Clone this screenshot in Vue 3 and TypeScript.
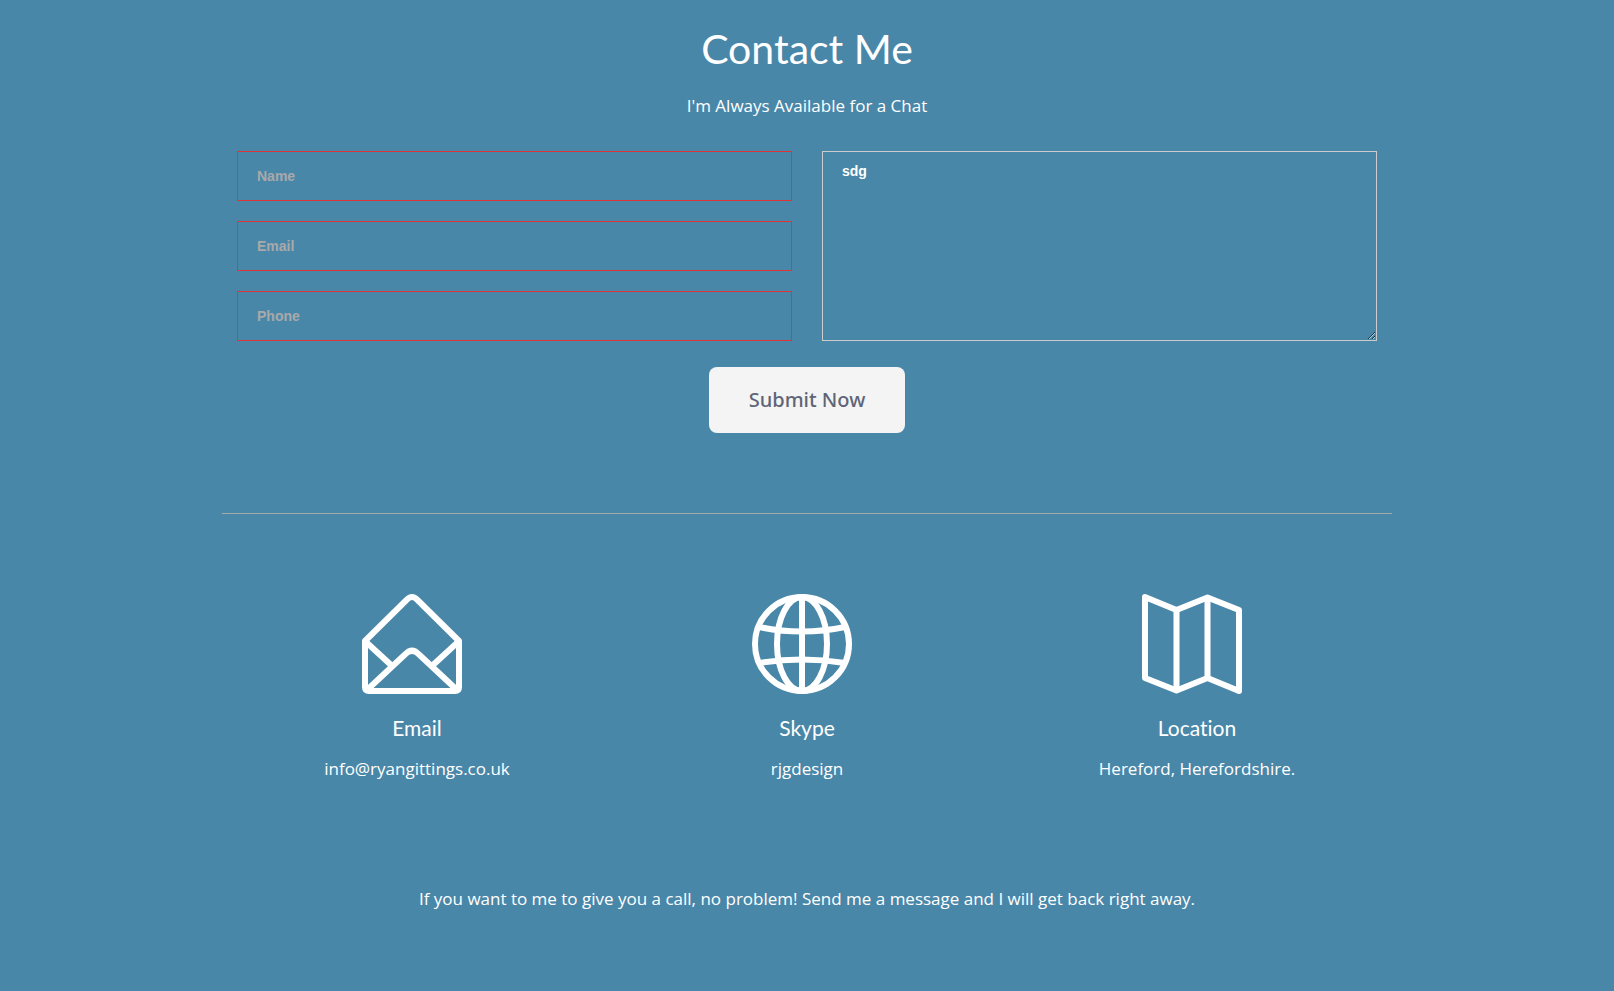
<script setup lang="ts">
import { ref } from 'vue'

interface Field {
  id: string
  label: string
  type: string
}

interface Detail {
  icon: 'mail' | 'globe' | 'map'
  title: string
  text: string
}

const fields: Field[] = [
  { id: 'name', label: 'Name', type: 'text' },
  { id: 'email', label: 'Email', type: 'email' },
  { id: 'phone', label: 'Phone', type: 'tel' },
]

const details: Detail[] = [
  { icon: 'mail', title: 'Email', text: 'info@ryangittings.co.uk' },
  { icon: 'globe', title: 'Skype', text: 'rjgdesign' },
  { icon: 'map', title: 'Location', text: 'Hereford, Herefordshire.' },
]

const values = ref<Record<string, string>>({ name: '', email: '', phone: '' })
const message = ref('sdg')
</script>

<template>
  <main class="contact">
    <header class="intro">
      <h1>Contact Me</h1>
      <p>I'm Always Available for a Chat</p>
    </header>

    <form class="form" novalidate @submit.prevent>
      <div class="fields">
        <div class="column">
          <input
            v-for="field in fields"
            :id="field.id"
            :key="field.id"
            v-model="values[field.id]"
            class="control"
            :class="{ invalid: !values[field.id] }"
            :type="field.type"
            :placeholder="field.label"
            :aria-label="field.label"
          />
        </div>
        <textarea v-model="message" class="control message" aria-label="Message"></textarea>
      </div>
      <button class="submit" type="submit">Submit Now</button>
    </form>

    <hr class="divider" />

    <section class="details">
      <article v-for="item in details" :key="item.title" class="detail">
        <div class="icon">
          <svg v-if="item.icon === 'mail'" viewBox="0 0 100 100" aria-hidden="true">
            <path d="M3 47 44.500 6Q50 0 55.500 6L97 47V93Q97 97 93 97H7Q3 97 3 93Z" />
            <path d="M4 48 29 71M96 48 71 71" />
            <path d="M5 96 43.500 60Q50 53.500 56.500 60L95 96" />
          </svg>
          <svg v-else-if="item.icon === 'globe'" viewBox="0 0 100 100" aria-hidden="true">
            <circle cx="50" cy="50" r="47" />
            <ellipse cx="50" cy="50" rx="25" ry="47" />
            <path d="M50 3V97" />
            <path d="M7 33Q50 42 93 33M7 69Q50 62 93 69" />
          </svg>
          <svg v-else viewBox="0 0 100 100" aria-hidden="true">
            <path d="M3 3 34.500 16 65.500 3.500 97 16V97L65.500 84 34.500 96.500 3 84Z" />
            <path d="M34.500 16V96M65.500 4V84" />
          </svg>
        </div>
        <h2>{{ item.title }}</h2>
        <p>{{ item.text }}</p>
      </article>
    </section>

    <p class="closing">
      If you want to me to give you a call, no problem! Send me a message and I will get back right away.
    </p>
  </main>
</template>

<style>
body {
  margin: 0;
  background: #4987a9;
}
</style>

<style scoped>
.contact {
  box-sizing: border-box;
  max-width: 1170px;
  margin: 0 auto;
  padding: 24px 0 72px;
  color: #fff;
  font-family: "Open Sans", "Noto Sans", sans-serif;
  font-size: 17px;
  line-height: 24px;
  text-align: center;
}

h1,
h2,
p {
  margin: 0;
}

h1,
h2 {
  font-family: Lato, sans-serif;
  font-weight: 400;
  font-variant-ligatures: none;
}

h1 {
  font-size: 41px;
  line-height: 50px;
}

.intro p {
  margin-top: 20px;
}

.form {
  padding: 33px 15px 0;
}

.fields {
  display: grid;
  grid-template-columns: 1fr 1fr;
  gap: 30px;
}

.column {
  display: grid;
  gap: 20px;
}

.control {
  box-sizing: border-box;
  display: block;
  width: 100%;
  height: 50px;
  margin: 0;
  padding: 9px 19px;
  border: 1px solid #ccc;
  border-radius: 0;
  outline: 0;
  background: transparent;
  color: #fff;
  font: bold 14px/20px "Liberation Sans", Arial, sans-serif;
}

.control::placeholder {
  color: #a9a9a9;
  opacity: 1;
}

.control.invalid {
  border-color: #e33434;
}

.message {
  height: 190px;
  resize: both;
}

.submit {
  margin-top: 26px;
  padding: 18px 40px;
  border: 0;
  border-radius: 8px;
  background: #f4f4f4;
  color: #5f6577;
  font: 500 20px/30px "Noto Sans", "Open Sans", sans-serif;
  cursor: pointer;
}

.divider {
  height: 1px;
  margin: 80px 0;
  border: 0;
  background: #a5a9ad;
}

.details {
  display: grid;
  grid-template-columns: repeat(3, 1fr);
}

.icon {
  height: 100px;
  padding-right: 10px;
}

.icon svg {
  width: 100px;
  height: 100px;
  fill: none;
  stroke: #fff;
  stroke-width: 6;
  stroke-linejoin: round;
}

h2 {
  margin-top: 20px;
  font-size: 21px;
  line-height: 28px;
}

.detail p {
  margin-top: 15px;
}

.closing {
  margin-top: 106px;
}
</style>
